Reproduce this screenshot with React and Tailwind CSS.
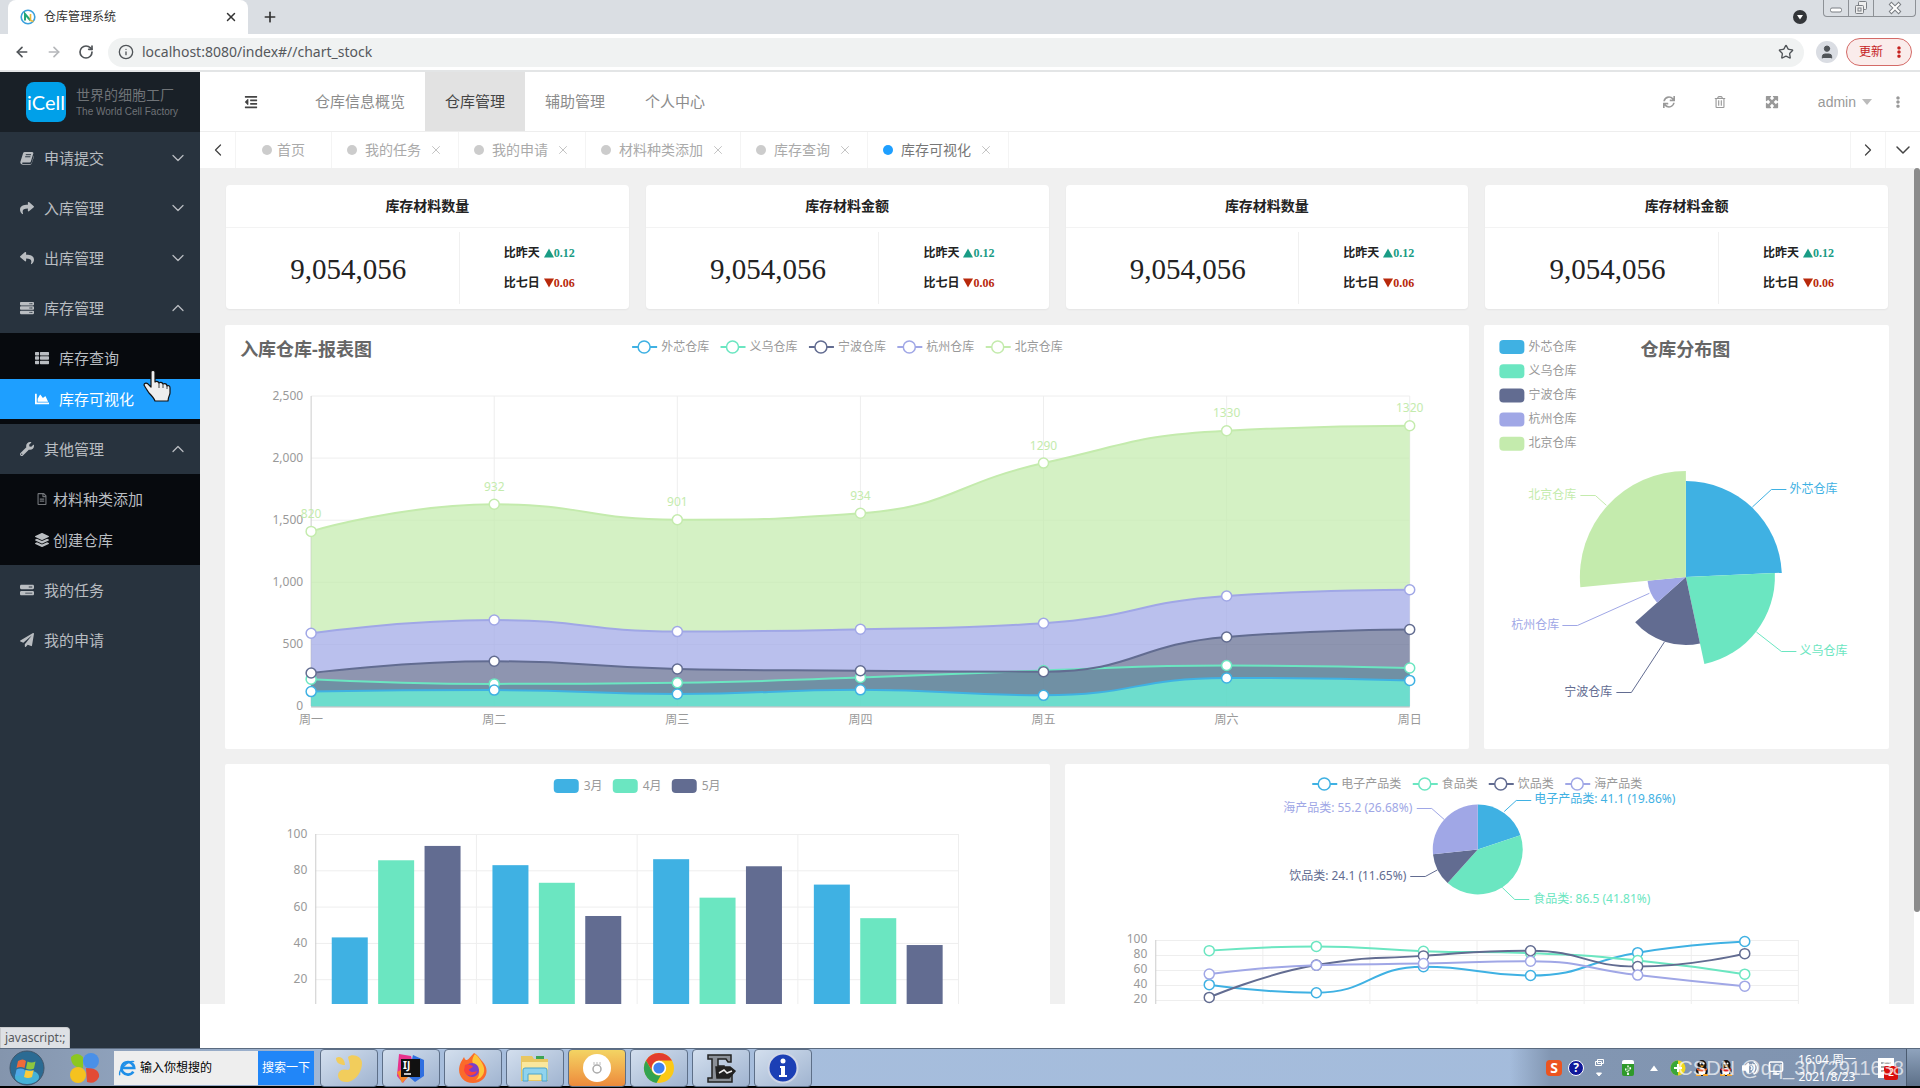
import {
  FaShare, FaReply, FaServer, FaThList, FaChartArea, FaWrench, FaRegFileAlt,
  FaLayerGroup, FaPaperPlane, FaOutdent, FaSync, FaRegTrashAlt,
  FaEllipsisV, FaUsb, FaVolumeUp,
} from "react-icons/fa";
import { FaBarsProgress, FaMaximize } from "react-icons/fa6";
import {
  ArrowLeft, ArrowRight, ChevronDown, ChevronLeft, ChevronRight, ChevronUp,
  Info, Plus, RotateCw, Star, User, X, Monitor,
} from "lucide-react";

const BLUE = "#3fb1e3";
const MINT = "#6be6c1";
const NAVY = "#626c91";
const PURPLE = "#a0a7e6";
const GREEN = "#c4ebad";

const warehouses = [
  { name: "外芯仓库", color: BLUE },
  { name: "义乌仓库", color: MINT },
  { name: "宁波仓库", color: NAVY },
  { name: "杭州仓库", color: PURPLE },
  { name: "北京仓库", color: GREEN },
];

function BookIcon({ className }) {
  return (
    <svg viewBox="0 0 16 16" className={className} fill="currentColor">
      <path d="M5.500 1H14q1.600.3 1.200 1.800L12.400 12q-.4 1-1.400 1H3.200q-.9.100-.8.900t1 .9h8.200q1.300 0 1.700-1.200L15.900 5q.2 1-.1 1.900l-2.300 7.200Q13 15.800 11.500 15.800H3.200Q.2 15.600.3 12.800L3.600 2.400Q4.100 1 5.500 1z" />
      <path d="M6.600 4.200h6M5.900 6.600h6" stroke="#28333e" strokeWidth="1.100" />
    </svg>
  );
}

const menu = [
  { label: "申请提交", icon: BookIcon, open: false },
  { label: "入库管理", icon: FaShare, open: false },
  { label: "出库管理", icon: FaReply, open: false },
  {
    label: "库存管理", icon: FaServer, open: true,
    children: [
      { label: "库存查询", icon: FaThList },
      { label: "库存可视化", icon: FaChartArea, active: true },
    ],
  },
  {
    label: "其他管理", icon: FaWrench, open: true, tight: true,
    children: [
      { label: "材料种类添加", icon: FaRegFileAlt, dim: true },
      { label: "创建仓库", icon: FaLayerGroup },
    ],
  },
  { label: "我的任务", icon: FaBarsProgress },
  { label: "我的申请", icon: FaPaperPlane },
];

const topNav = ["仓库信息概览", "仓库管理", "辅助管理", "个人中心"];
const tabs = ["我的任务", "我的申请", "材料种类添加", "库存查询", "库存可视化"];
const stats = ["库存材料数量", "库存材料金额", "库存材料数量", "库存材料金额"];

/* ---------- chart helpers ---------- */

// bezier smoothing, control points kept inside the neighbouring values
function smoothSegments(pts) {
  const between = (v, a, b) => Math.max(Math.min(a, b), Math.min(Math.max(a, b), v));
  return pts.map((p, i) => {
    const prev = pts[i - 1];
    const next = pts[i + 1];
    if (!prev || !next) return { before: p, after: p };
    const dx = (next[0] - prev[0]) / 4;
    const dy = (next[1] - prev[1]) / 4;
    let ay = between(p[1] + dy, p[1], next[1]);
    const by = between(p[1] - (ay - p[1]), p[1], prev[1]);
    ay = p[1] - (by - p[1]);
    return { before: [p[0] - dx, by], after: [p[0] + dx, ay] };
  });
}

function linePath(pts, start = "M") {
  const cps = smoothSegments(pts);
  let d = `${start}${pts[0].join(",")}`;
  for (let i = 1; i < pts.length; i++) {
    d += `C${cps[i - 1].after.join(",")} ${cps[i].before.join(",")} ${pts[i].join(",")}`;
  }
  return d;
}

function areaPath(top, bottom) {
  return `${linePath(top)}${linePath([...bottom].reverse(), "L")}Z`;
}

function slicePath(cx, cy, r, from, to) {
  const at = (deg) => {
    const a = (deg * Math.PI) / 180;
    return `${cx + r * Math.sin(a)},${cy - r * Math.cos(a)}`;
  };
  return `M${cx},${cy}L${at(from)}A${r},${r} 0 ${to - from > 180 ? 1 : 0} 1 ${at(to)}Z`;
}

function Label({ x, y, anchor = "start", fill = "#999", className = "text-xs", children }) {
  return (
    <text x={x} y={y} textAnchor={anchor} dominantBaseline="central" fill={fill} className={className}>
      {children}
    </text>
  );
}

function LineLegend({ cx, cy, color, name }) {
  return (
    <g>
      <path d={`M${cx - 12},${cy}h25`} stroke={color} strokeWidth="2" />
      <circle cx={cx} cy={cy} r="6" fill="#fff" stroke={color} strokeWidth="1.5" />
      <Label x={cx + 17} y={cy - 1}>{name}</Label>
    </g>
  );
}

function Callout({ points, tx, ty, anchor, color, children }) {
  return (
    <g>
      <polyline points={points} fill="none" stroke={color} strokeWidth="1" />
      <Label x={tx} y={ty} anchor={anchor} fill={color}>{children}</Label>
    </g>
  );
}

/* ---------- charts ---------- */

function StockAreaChart() {
  const days = ["周一", "周二", "周三", "周四", "周五", "周六", "周日"];
  const x = (i) => 86 + i * 183.1;
  const y = (v) => 381.5 - v * 0.1242;
  const toPts = (values) => values.map((v, i) => [x(i), y(v)]);
  const zero = days.map(() => 0);
  const outer = [120, 132, 101, 134, 90, 230, 210];
  const yiwu = [220, 182, 191, 234, 290, 330, 310];
  const ningbo = [270, 364, 302, 288, 280, 560, 620];
  const hangzhou = [590, 696, 603, 622, 670, 890, 940];
  const beijing = [1410, 1628, 1504, 1556, 1960, 2220, 2260];
  const sales = [820, 932, 901, 934, 1290, 1330, 1320];
  const series = [
    { values: outer, base: zero, color: BLUE },
    { values: yiwu, base: zero, color: MINT },
    { values: ningbo, base: outer, color: NAVY },
    { values: hangzhou, base: ningbo, color: PURPLE },
    { values: beijing, base: hangzhou, color: GREEN },
  ];

  return (
    <svg viewBox="0 0 1244 424" className="block h-[424px] w-full">
      <Label x={15} y={24} fill="#666" className="text-lg font-bold">入库仓库-报表图</Label>
      {warehouses.map((w, i) => (
        <LineLegend key={w.name} cx={419 + i * 88.4} cy={22} color={w.color} name={w.name} />
      ))}
      {[0, 500, 1000, 1500, 2000, 2500].map((v) => (
        <g key={v}>
          <path d={`M86,${y(v)}H${x(6)}`} stroke="#eee" />
          <Label x={78} y={y(v) - 1} anchor="end">{v.toLocaleString("en-US")}</Label>
        </g>
      ))}
      {days.map((d, i) => (
        <g key={d}>
          <path d={`M${x(i)},71V381`} stroke={i ? "#eee" : "#ccc"} />
          <Label x={x(i)} y={394} anchor="middle">{d}</Label>
        </g>
      ))}
      {series.map((s) => (
        <path key={s.color} d={areaPath(toPts(s.values), toPts(s.base))} fill={s.color} fillOpacity="0.72" />
      ))}
      <path d={`M86,382H${x(6)}`} stroke="#bbb" />
      {series.map((s) => (
        <path key={s.color} d={linePath(toPts(s.values))} fill="none" stroke={s.color} strokeWidth="2" />
      ))}
      {[1, 0, 2, 3, 4].map((k) =>
        toPts(series[k].values).map(([px, py]) => (
          <circle key={`${k}-${px}`} cx={px} cy={py} r="5" fill="#fff" stroke={series[k].color} strokeWidth="1.5" />
        ))
      )}
      {sales.map((v, i) => (
        <Label key={v} x={x(i)} y={y(beijing[i]) - 18} anchor="middle" fill={GREEN}>{v}</Label>
      ))}
    </svg>
  );
}

function WarehouseRose() {
  const slices = [
    { r: 96, from: 0, to: 87.4 },
    { r: 89, from: 87.4, to: 168 },
    { r: 68, from: 168, to: 228.2 },
    { r: 38.5, from: 228.2, to: 264.5 },
    { r: 106, from: 264.5, to: 360 },
  ];
  const callouts = [
    { points: "268,182 287,164.5 302,164.5", tx: 305, ty: 163, anchor: "start" },
    { points: "272,307 297,326.5 312,326.5", tx: 315, ty: 325, anchor: "start" },
    { points: "180,317 147,367.5 132,367.5", tx: 128, ty: 366, anchor: "end" },
    { points: "165,268.3 93,300.5 78,300.5", tx: 75, ty: 299, anchor: "end" },
    { points: "122,180.3 111,170.5 96,170.5", tx: 92, ty: 169, anchor: "end" },
  ];
  return (
    <svg viewBox="0 0 404 424" className="block h-[424px] w-full">
      {warehouses.map((w, i) => (
        <g key={w.name}>
          <rect x="15" y={15 + i * 24.2} width="25" height="14" rx="4" fill={w.color} />
          <Label x={44} y={21 + i * 24.2}>{w.name}</Label>
        </g>
      ))}
      <Label x={201} y={24} anchor="middle" fill="#666" className="text-lg font-bold">仓库分布图</Label>
      {slices.map((s, i) => (
        <path key={i} d={slicePath(201.5, 252, s.r, s.from, s.to)} fill={warehouses[i].color} />
      ))}
      {callouts.map((c, i) => (
        <Callout key={i} {...c} color={warehouses[i].color}>{warehouses[i].name}</Callout>
      ))}
    </svg>
  );
}

function MonthBars() {
  const colors = [BLUE, MINT, NAVY];
  const groups = [
    [43.3, 85.8, 93.7],
    [83.1, 73.4, 55.1],
    [86.4, 65.2, 82.5],
    [72.4, 53.9, 39.1],
  ];
  const y = (v) => 252 - v * 1.815;
  const x = (i) => 90.5 + i * 160.7;
  return (
    <svg viewBox="0 0 824 424" className="block h-[424px] w-full">
      {["3月", "4月", "5月"].map((m, i) => (
        <g key={m}>
          <rect x={328.5 + i * 59} y="15" width="25" height="14" rx="4" fill={colors[i]} />
          <Label x={358.5 + i * 59} y={21}>{m}</Label>
        </g>
      ))}
      {[20, 40, 60, 80, 100].map((v) => (
        <g key={v}>
          <path d={`M90,${y(v)}H${x(4)}`} stroke="#eee" />
          <Label x={82} y={y(v) - 1} anchor="end">{v}</Label>
        </g>
      ))}
      {[0, 1, 2, 3, 4].map((i) => (
        <path key={i} d={`M${x(i)},70V252`} stroke={i ? "#eee" : "#ccc"} />
      ))}
      {groups.map((g, i) =>
        g.map((v, k) => (
          <rect key={`${i}-${k}`} x={x(i) + 16 + k * 46.4} y={y(v)} width="36" height={252 - y(v)} fill={colors[k]} />
        ))
      )}
    </svg>
  );
}

function CategoryChart() {
  const series = [
    { name: "电子产品类", color: BLUE, lx: 259, values: [41.1, 30.4, 65.1, 53.3, 83.8, 98.7] },
    { name: "食品类", color: MINT, lx: 359.5, values: [86.5, 92.1, 85.7, 83.1, 73.4, 55.1] },
    { name: "饮品类", color: NAVY, lx: 435.5, values: [24.1, 67.2, 79.5, 86.4, 65.2, 82.5] },
    { name: "海产品类", color: PURPLE, lx: 512, values: [55.2, 67.1, 69.2, 72.4, 53.9, 39.1] },
  ];
  const total = series.reduce((sum, s) => sum + s.values[0], 0);
  let angle = 0;
  const slices = series.map((s) => {
    const from = angle;
    angle += (s.values[0] / total) * 360;
    return { color: s.color, from, to: angle };
  });
  const callouts = [
    { points: "439,47.5 451,36.5 466,36.5", tx: 469, ty: 34, anchor: "start", share: "19.86%" },
    { points: "437,123.5 449.5,135.5 464,135.5", tx: 468, ty: 134, anchor: "start", share: "41.81%" },
    { points: "372,106 360,112.5 345,112.5", tx: 341, ty: 111, anchor: "end", share: "11.65%" },
    { points: "379,55.5 366.5,44.5 351.5,44.5", tx: 347, ty: 43, anchor: "end", share: "26.68%" },
  ];
  const y = (v) => 251.5 - v * 0.75;
  const pts = (values) => values.map((v, i) => [144 + i * 107.1, y(v)]);
  return (
    <svg viewBox="0 0 824 424" className="block h-[424px] w-full">
      {series.map((s) => (
        <LineLegend key={s.name} cx={s.lx} cy={20} color={s.color} name={s.name} />
      ))}
      {slices.map((s) => (
        <path key={s.color} d={slicePath(412.5, 85.5, 45, s.from, s.to)} fill={s.color} />
      ))}
      {callouts.map(({ share, ...c }, i) => (
        <Callout key={share} {...c} color={series[i].color}>
          {`${series[i].name}: ${series[i].values[0]} (${share})`}
        </Callout>
      ))}
      {[20, 40, 60, 80, 100].map((v) => (
        <g key={v}>
          <path d={`M90.5,${y(v)}H733`} stroke="#eee" />
          <Label x={82} y={y(v) - 2} anchor="end">{v}</Label>
        </g>
      ))}
      {[0, 1, 2, 3, 4, 5, 6].map((i) => (
        <path key={i} d={`M${90.5 + i * 107.1},176V252`} stroke={i ? "#eee" : "#ccc"} />
      ))}
      {series.map((s) => (
        <g key={s.color} stroke={s.color}>
          <path d={linePath(pts(s.values))} fill="none" strokeWidth="2" />
          {pts(s.values).map(([px, py]) => (
            <circle key={px} cx={px} cy={py} r="5" fill="#fff" strokeWidth="1.5" />
          ))}
        </g>
      ))}
    </svg>
  );
}

/* ---------- browser frame ---------- */

function BrowserBar() {
  return (
    <header className="shrink-0">
      <div className="flex h-[34px] items-end bg-[#dadee3] pl-2">
        <div className="flex h-[34px] w-60 items-center rounded-t-lg bg-white pr-2.5 pl-3">
          <svg viewBox="0 0 16 16" className="size-4">
            <circle cx="8" cy="8" r="6.8" fill="none" stroke="#3aa0dc" strokeWidth="1.6" />
            <path d="M5 11.5V5l5.5 6.5" fill="none" stroke="#22a578" strokeWidth="2" />
            <path d="M10.5 5v6.5l3 1" fill="none" stroke="#e8b93c" strokeWidth="1.6" />
          </svg>
          <span className="ml-2 flex-1 text-xs text-[#333]">仓库管理系统</span>
          <button aria-label="关闭标签页"><X className="size-3.5 text-[#333]" strokeWidth={2.5} /></button>
        </div>
        <button aria-label="新标签页" className="ml-3.5 flex h-[34px] items-center">
          <Plus className="size-4 text-[#333]" strokeWidth={2.5} />
        </button>
        <div className="ml-auto flex h-full items-start">
          <div className="mt-2.5 mr-4 flex size-3.5 items-center justify-center rounded-full bg-[#33363a]">
            <svg viewBox="0 0 8 8" className="size-2"><path d="M1 2h6L4 6.5z" fill="#fff" /></svg>
          </div>
          <div className="mr-1 flex h-[17px] rounded-b border border-t-0 border-[#8d9196] text-[#7b7f84]">
            <button aria-label="最小化" className="flex w-[25px] items-center justify-center border-r border-[#8d9196]">
              <svg viewBox="0 0 14 14" className="size-3.5"><rect x="1.5" y="7" width="11" height="4" rx="1.5" fill="#fff" stroke="currentColor" /></svg>
            </button>
            <button aria-label="还原" className="flex w-[25px] items-center justify-center border-r border-[#8d9196]">
              <svg viewBox="0 0 14 14" className="size-3.5" fill="#eee" stroke="currentColor">
                <rect x="4.5" y="0.5" width="8" height="8" rx="1" />
                <rect x="1.5" y="4.5" width="8" height="8" rx="1" />
                <rect x="4" y="7" width="3" height="3" />
              </svg>
            </button>
            <button aria-label="关闭" className="flex w-[41px] items-center justify-center">
              <svg viewBox="0 0 14 14" className="size-3.5">
                <path d="M2 2l10 10M12 2L2 12" stroke="currentColor" strokeWidth="4" />
                <path d="M2.7 2.7l8.6 8.6M11.3 2.7L2.7 11.3" stroke="#fff" strokeWidth="2" />
              </svg>
            </button>
          </div>
        </div>
      </div>
      <div className="flex h-[38px] items-center border-b-2 border-[#e3e5e6] bg-white pr-2 pl-3.5 text-[#505458]">
        <button aria-label="后退"><ArrowLeft className="size-4" strokeWidth={2.5} /></button>
        <button aria-label="前进" className="ml-4"><ArrowRight className="size-4 text-[#b5b7ba]" strokeWidth={2.5} /></button>
        <button aria-label="刷新" className="ml-4"><RotateCw className="size-4" strokeWidth={2.5} /></button>
        <div className="ml-3.5 flex h-[29px] flex-1 items-center rounded-full bg-[#f0f2f2] px-2.5">
          <Info className="size-4" />
          <input
            aria-label="地址栏"
            defaultValue="localhost:8080/index#//chart_stock"
            className="ml-2 flex-1 bg-transparent text-sm text-[#55585c] outline-none"
          />
          <button aria-label="收藏"><Star className="size-4" /></button>
        </div>
        <div className="mr-2 ml-3 flex size-[22px] items-center justify-center rounded-full bg-[#dadde3]">
          <User className="size-4 fill-current" strokeWidth={1.5} />
        </div>
        <button className="flex h-7 items-center gap-2.5 rounded-full border border-[#d46a67] bg-[#faeceb] pr-1.5 pl-3 text-xs text-[#c5221f]">
          更新
          <FaEllipsisV className="size-3" />
        </button>
      </div>
    </header>
  );
}

function HandCursor() {
  return (
    <svg viewBox="0 0 28 32" className="pointer-events-none absolute top-[298px] left-[143px] h-8 w-7">
      <path
        d="M8 2c0-2 4-2 4 0v10c1-1 3-1 4 1 1-1 3-1 4 1 2-1 4 0 4 2 2-1 3 0 3 2v5c0 2-2 4-2 8H12c-1-3-4-6-6-8-2-3-4-6-5-8 0-2 3-3 5 0l2 2z"
        fill="#eee" stroke="#111" strokeWidth="1.2" strokeLinejoin="round"
      />
      <path d="M16 13v5M20 14v4M24 16v3" stroke="#444" strokeWidth="1" />
    </svg>
  );
}

function Sidebar() {
  return (
    <aside className="relative w-[200px] shrink-0 bg-[#28333e] text-[15px] text-[#b9bdc1]">
      <div className="flex h-[60px] items-center bg-[#192027] pl-[26px]">
        <div className="flex h-10 w-10 items-center justify-center rounded-lg bg-[#00a0e9] font-['Lato','Noto_Sans',sans-serif] text-xl text-white">
          iCell
        </div>
        <div className="ml-2.5 text-[#6f7377]">
          <div className="text-sm leading-5">世界的细胞工厂</div>
          <div className="font-['Liberation_Sans',sans-serif] text-[10px] leading-[14px]">The World Cell Factory</div>
        </div>
      </div>
      <nav className="pt-px">
        {menu.map(({ label, icon: Icon, open, tight, children }) => (
          <div key={label}>
            <a href="#" className="flex h-[50px] items-center pr-3 pl-5">
              <Icon className="size-3.5" />
              <span className="ml-2.5 flex-1">{label}</span>
              {open === true && <ChevronUp className="size-5" strokeWidth={1.5} />}
              {open === false && <ChevronDown className="size-5" strokeWidth={1.5} />}
            </a>
            {children && (
              <div className="flex flex-col gap-px bg-[#070a0e] py-[5px]">
                {children.map(({ label: name, icon: SubIcon, active, dim }) => (
                  <a
                    key={name}
                    href="#"
                    className={`flex h-10 items-center pl-[35px] ${tight ? "gap-1" : "gap-2.5"} ${active ? "bg-[#1e9fff] text-white" : ""}`}
                  >
                    <SubIcon className={dim ? "size-3.5 p-px opacity-60" : "size-3.5"} />
                    {name}
                  </a>
                ))}
              </div>
            )}
          </div>
        ))}
      </nav>
      <HandCursor />
      <div className="absolute bottom-0 left-0 flex h-[21px] items-center rounded-tr border border-b-0 border-[#c8cacc] bg-[#dee1e5] px-1 text-xs text-[#55585c]">
        javascript:;
      </div>
    </aside>
  );
}

function TopBar() {
  return (
    <div className="flex h-[60px] shrink-0 items-stretch border-b border-[#eee] text-[15px] text-[#8c8c8c]">
      <button aria-label="折叠菜单" className="flex w-[95px] items-center pl-11">
        <FaOutdent className="size-3.5 text-[#444]" />
      </button>
      {topNav.map((name) => (
        <a
          key={name}
          href="#"
          className={`flex items-center px-5 ${name === "仓库管理" ? "bg-[#e2e2e2] text-[#444]" : ""}`}
        >
          {name}
        </a>
      ))}
      <div className="ml-auto flex items-center pr-4 text-[#999]">
        <button aria-label="刷新页面" className="flex w-[51px] justify-center"><FaSync className="size-3" /></button>
        <button aria-label="清理缓存" className="flex w-[51px] justify-center"><FaRegTrashAlt className="size-3" /></button>
        <button aria-label="全屏" className="flex w-[52px] justify-center"><FaMaximize className="size-3.5" /></button>
        <button className="ml-5 flex items-center gap-1.5 font-['Liberation_Sans',sans-serif] text-sm">
          admin
          <svg viewBox="0 0 10 6" className="h-1.5 w-2.5"><path d="M0 0h10L5 6z" fill="#bbb" /></svg>
        </button>
        <button aria-label="更多" className="ml-5"><FaEllipsisV className="size-3" /></button>
      </div>
    </div>
  );
}

function TabBar() {
  return (
    <div className="flex h-9 shrink-0 items-stretch text-sm text-[#aaa]">
      <button aria-label="向左" className="flex w-9 items-center justify-center border-r border-[#f4f4f4]">
        <ChevronLeft className="size-5 text-[#444]" strokeWidth={1.5} />
      </button>
      <a href="#" className="flex items-center gap-[5px] border-r border-[#f4f4f4] px-[26px]">
        <span className="size-2.5 rounded-full bg-[#ccc]" />
        首页
      </a>
      {tabs.map((name) => {
        const active = name === "库存可视化";
        return (
          <div key={name} className="flex items-center border-r border-[#f4f4f4] px-[15px]">
            <span className={`size-2.5 rounded-full ${active ? "bg-[#1e9fff]" : "bg-[#ccc]"}`} />
            <a href="#" className={`mx-2 ${active ? "text-[#777]" : ""}`}>{name}</a>
            <button aria-label={`关闭${name}`}><X className="size-3.5 text-[#bbb]" strokeWidth={1.5} /></button>
          </div>
        );
      })}
      <button aria-label="向右" className="ml-auto flex w-[35px] items-center justify-center border-l border-[#f4f4f4]">
        <ChevronRight className="size-5 text-[#444]" strokeWidth={1.5} />
      </button>
      <button aria-label="展开" className="flex w-[35px] items-center justify-center border-l border-[#f4f4f4]">
        <ChevronDown className="size-6 text-[#444]" strokeWidth={1.5} />
      </button>
    </div>
  );
}

function StatCard({ title }) {
  return (
    <section className="h-[124px] rounded bg-white text-[#222] shadow-xs">
      <h2 className="flex h-[43px] items-center justify-center border-b border-[#f3f3f3] text-sm font-bold">{title}</h2>
      <div className="flex h-[80px] items-stretch py-1">
        <div className="flex w-[58%] items-center justify-center border-r border-[#f0f0f0] pt-1 pl-3 font-['Liberation_Serif',serif] text-[29px]">
          9,054,056
        </div>
        <div className="flex flex-1 flex-col items-center justify-center gap-3 pr-2.5 text-xs leading-[18px] font-bold">
          <div className="flex items-center">
            比昨天
            <svg viewBox="0 0 10 10" className="ml-1 size-2.5"><path d="M5 0.5L10 9.5H0z" fill="#1a9c85" /></svg>
            <span className="font-['Liberation_Serif',serif] text-[#1a9c85]">0.12</span>
          </div>
          <div className="flex items-center">
            比七日
            <svg viewBox="0 0 10 10" className="ml-1 size-2.5"><path d="M0 0.5H10L5 9.5z" fill="#b8290c" /></svg>
            <span className="font-['Liberation_Serif',serif] text-[#b8290c]">0.06</span>
          </div>
        </div>
      </div>
    </section>
  );
}

/* ---------- desktop taskbar ---------- */

const taskIcons = {
  paws: (
    <svg viewBox="0 0 32 32" className="size-8" fill="#f2cd5c">
      <path d="M3 6c5-3 9 2 9 7-5 0-9-2-9-7zM15 5c4-4 14-1 14 6 0 8-5 17-14 19-8 1-12-5-9-10 2-3 6-3 9-2 4-1 1-8 0-13z" />
    </svg>
  ),
  idea: (
    <svg viewBox="0 0 32 32" className="size-8">
      <path d="M4 2l12 2 3 12L8 31 2 24z" fill="#e8318c" />
      <path d="M18 3l11 5v16l-9 6-7-6z" fill="#2f6fe0" />
      <path d="M2 20l8-4 3 9-6 6z" fill="#f58a2c" />
      <rect x="6" y="7" width="19" height="18" fill="#111" />
      <text x="8" y="17" fill="#fff" className="text-[10px] font-bold">IJ</text>
      <path d="M9 22h7" stroke="#fff" strokeWidth="1.5" />
    </svg>
  ),
  firefox: (
    <svg viewBox="0 0 32 32" className="size-8">
      <path d="M17 1c5 3 6 6 8 8 9 9 4 22-9 22C4 31-1 20 4 10c1-2 2-3 3-5 1 3 2 3 3 3 2-1 4-4 7-7z" fill="#fb6a2a" />
      <path d="M18 2c4 3 5 6 7 9 5 8 1 15-6 17 5-5 4-12-1-15-4-2-3-7 0-11z" fill="#fdc63a" />
      <circle cx="15" cy="18" r="7" fill="#7a3fc8" />
      <path d="M8 13c3-2 5 0 8 1-1 3-4 2-4 4 2 3 5 2 8 1-2 6-12 6-13-1z" fill="#f8423c" />
    </svg>
  ),
  folder: (
    <svg viewBox="0 0 32 32" className="size-8">
      <path d="M2 4h11l2 3h14v22H2z" fill="#e9c763" />
      <path d="M3 10h26v18H3z" fill="#fae79d" />
      <path d="M17 4h8v3h-8z" fill="#3da454" />
      <path d="M4 29V18q0-2 2-2h20q2 0 2 2v11h-5v-7H9v7z" fill="#8fd3ee" stroke="#4ba4cc" />
    </svg>
  ),
  hand: (
    <svg viewBox="0 0 32 32" className="size-8">
      <circle cx="16" cy="16" r="14" fill="#fff" />
      <circle cx="16" cy="17" r="4" fill="none" stroke="#aaa" strokeWidth="1.5" />
      <path d="M13 13v-3M16 13v-3M19 13v-3" stroke="#bbb" />
    </svg>
  ),
  chrome: (
    <svg viewBox="0 0 32 32" className="size-8">
      <circle cx="16" cy="16" r="15" fill="#fbc917" />
      <path d="M3 8.500A15 15 0 0 1 29 8.500H16a7.500 7.500 0 0 0-6.500 11z" fill="#e23c2e" />
      <path d="M3 8.500l6.500 11.200A7.500 7.500 0 0 0 18 23l-4.500 8A15 15 0 0 1 3 8.500z" fill="#32a350" />
      <circle cx="16" cy="16" r="7.200" fill="#fff" />
      <circle cx="16" cy="16" r="5.600" fill="#3f82f0" />
    </svg>
  ),
  editor: (
    <svg viewBox="0 0 32 32" className="size-8" fill="#8b9097" stroke="#222" strokeWidth="1.500">
      <path d="M3 3h23v7h-3l-2-3h-8v7h6v4h-6v7h9l3-4h2v9H3v-4h4V7H3z" />
      <path d="M11 15h14l5 4-6 7H12z" fill="#222" />
      <path d="M14 21l5-3 3 3 5-2" fill="none" stroke="#eee" />
    </svg>
  ),
  info: (
    <svg viewBox="0 0 32 32" className="size-8">
      <circle cx="16" cy="16" r="14.500" fill="#1b3fb5" stroke="#cfd6e6" strokeWidth="2" />
      <circle cx="16" cy="9" r="2.500" fill="#fff" />
      <path d="M13 14h5v9h2v2h-8v-2h2v-7h-1z" fill="#fff" />
    </svg>
  ),
};

function Taskbar() {
  return (
    <footer className="relative flex h-10 shrink-0 items-center border-t border-b-2 border-t-[#5b6b80] border-b-black bg-linear-to-r from-[#8495ad] via-[#a7bedd] via-20% to-[#a3bbdb]">
      <button aria-label="开始" className="ml-[9px]">
        <svg viewBox="0 0 36 36" className="size-9">
          <circle cx="18" cy="18" r="17" fill="#2b6b93" stroke="#41566b" />
          <ellipse cx="18" cy="27" rx="12" ry="7" fill="#4cc4e8" opacity="0.8" />
          <path d="M9 11q5-3 8 0l-1.500 7q-4-2-8 0z" fill="#ef6a3a" />
          <path d="M18.500 11.500q4 2 8 0L25 18.500q-4 2-8 0z" fill="#8fc63f" />
          <path d="M7.500 19.500q4-2 8 0L14 26.500q-4-2-8 0z" fill="#4fa8e8" />
          <path d="M16.700 20q4 2 8 0L23 27q-4 2-8 0z" fill="#fbcb3c" />
        </svg>
      </button>
      <svg viewBox="0 0 32 32" className="ml-6 size-8">
        <path d="M2 5q6-6 12 0v11q-12 0-12-11z" fill="#8cc722" />
        <circle cx="22" cy="9" r="8" fill="#4a90e8" />
        <circle cx="9" cy="23" r="8" fill="#f5c21f" />
        <path d="M17 16q14 0 13 9-4 8-12 5z" fill="#e24b35" />
      </svg>
      <form className="ml-[13px] flex h-[34px] items-stretch bg-[#eee]">
        <svg viewBox="0 0 20 20" className="ml-1 size-[18px] self-center" fill="none" stroke="#1f8fe8" strokeWidth="3">
          <path d="M17 14a7 7 0 1 1 1-4H5" />
          <path d="M2 18C0 12 12 1 18 3" strokeWidth="1.500" />
        </svg>
        <input aria-label="搜索" defaultValue="输入你想搜的" className="ml-1 w-[118px] bg-transparent text-xs text-black outline-none" />
        <button type="button" className="bg-[#2186f8] px-1 text-xs text-white">搜索一下</button>
      </form>
      <div className="ml-1.5 flex items-center gap-1">
        {Object.entries(taskIcons).map(([name, icon]) => (
          <button
            key={name}
            aria-label={name}
            className={`flex h-[38px] w-[58px] items-center justify-center rounded-sm border border-[#5d6f88] ${
              name === "hand" ? "bg-linear-to-b from-[#f3d463] to-[#ec8a3c]" : "bg-linear-to-br from-[#d3dfee] to-[#a0b4d0]"
            }`}
          >
            {icon}
          </button>
        ))}
      </div>
      <div className="ml-auto flex h-full items-center bg-linear-to-r from-transparent via-[#8296b2] via-10% to-[#8094b0] pl-9 text-white">
        <span className="flex size-4 items-center justify-center rounded-sm bg-[#ec5420] text-sm font-bold">S</span>
        <span className="ml-1.5 flex size-4 items-center justify-center rounded-full border border-white bg-[#10189a] text-xs font-bold">?</span>
        <svg viewBox="0 0 10 20" className="ml-2.5 h-5 w-2.5" fill="none" stroke="#fff">
          <path d="M3.500 1.500h6v4h-6zM1.500 3.500h6v4h-6z" />
          <path d="M2.500 15h5L5 18z" fill="#fff" />
        </svg>
        <span className="ml-[18px] flex h-4 w-3 items-center justify-center rounded-xs border-t-4 border-white bg-[#2f9a2a]">
          <FaUsb className="size-2.5 -rotate-90" />
        </span>
        <svg viewBox="0 0 8 8" className="ml-4 size-2"><path d="M4 1.500L8 7H0z" fill="#fff" /></svg>
        <svg viewBox="0 0 16 16" className="ml-3 size-4">
          <circle cx="8" cy="8" r="7.500" fill="#f0d81e" />
          <path d="M8 .5a7.500 7.500 0 0 0 0 15z" fill="#3aa63a" />
          <path d="M8 4v8M4 8h8" stroke="#fff" strokeWidth="2" />
        </svg>
        {["#e8602c", "#d8231f"].map((scarf) => (
          <svg key={scarf} viewBox="0 0 16 16" className="ml-2 size-4">
            <ellipse cx="8" cy="5" rx="4.500" ry="5" fill="#111" />
            <ellipse cx="8" cy="11" rx="6" ry="5" fill="#111" />
            <ellipse cx="8" cy="11.500" rx="3.500" ry="3.500" fill="#fff" />
            <path d="M3 8q5 3 10 0v2q-5 3-10 0z" fill={scarf} />
            <path d="M5.500 5.500h5L8 7.500zM2 14h5v2H2zM9 14h5v2H9z" fill="#f4a52a" />
            <circle cx="6.500" cy="3.500" r="1" fill="#fff" />
            <circle cx="9.500" cy="3.500" r="1" fill="#fff" />
          </svg>
        ))}
        <FaVolumeUp className="ml-2 size-4" />
        <Monitor className="ml-2.5 size-4" />
        <div className="ml-3 w-[62px] text-center text-xs leading-[17px]">
          16:04 周一
          <br />
          2021/8/23
        </div>
        <div className="relative ml-5 h-5 w-4 bg-white">
          <svg viewBox="0 0 16 20" className="h-5 w-4"><path d="M3 5h10M3 9h8M3 13h6" stroke="#555" /></svg>
          <span className="absolute top-2 left-1.5 flex size-3.5 items-center justify-center rounded-xs bg-[#d8100c] text-[10px]">2</span>
        </div>
        <div className="ml-3 h-full w-3.5 border-l border-[#4b5b70] bg-linear-to-b from-[#8fa3bd] to-[#5d7088]" />
      </div>
      <div className="absolute right-4 bottom-1 font-['Liberation_Sans',sans-serif] text-xl leading-7 text-white/70">
        CSDN @qq_3072911638
      </div>
    </footer>
  );
}

export default function App() {
  return (
    <div className="flex h-screen flex-col overflow-hidden bg-white font-['Noto_Sans','Noto_Sans_CJK_SC',sans-serif]">
      <BrowserBar />
      <div className="flex min-h-0 flex-1">
        <Sidebar />
        <div className="flex min-w-0 flex-1 flex-col bg-white">
          <TopBar />
          <TabBar />
          <div className="flex min-h-0 flex-1">
            <main className="min-w-0 flex-1 overflow-hidden bg-[#f0f0f0] px-[25px] pt-[17px]">
              <div className="grid grid-cols-4 gap-[17px] px-px">
                {stats.map((title, i) => <StatCard key={i} title={title} />)}
              </div>
              <div className="mt-4 grid grid-cols-4 gap-[15px]">
                <section className="col-span-3 rounded-xs bg-white"><StockAreaChart /></section>
                <section className="rounded-xs bg-white"><WarehouseRose /></section>
              </div>
              <div className="mt-[15px] grid grid-cols-2 gap-[15px]">
                <section className="rounded-xs bg-white"><MonthBars /></section>
                <section className="rounded-xs bg-white"><CategoryChart /></section>
              </div>
            </main>
            <div className="w-1.5 bg-white">
              <div className="h-[89%] rounded-full bg-[#8b8b8b]" />
            </div>
          </div>
          <div className="h-11 shrink-0 bg-white" />
        </div>
      </div>
      <Taskbar />
    </div>
  );
}
